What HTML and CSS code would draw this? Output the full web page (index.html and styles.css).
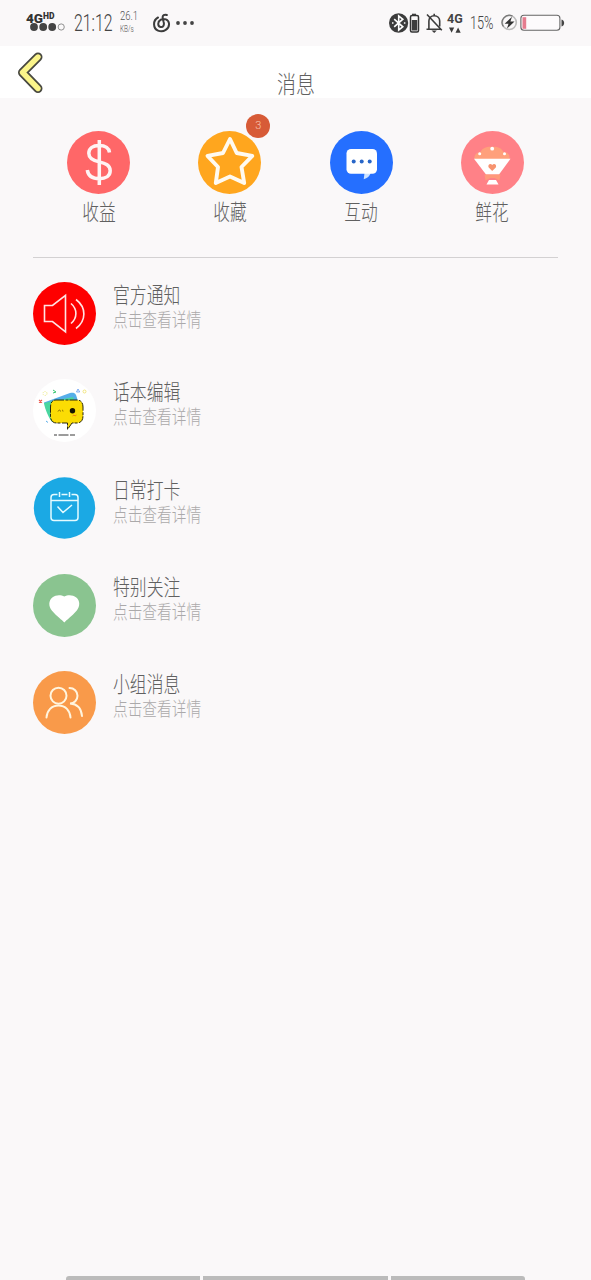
FILE: index.html
```html
<!DOCTYPE html>
<html lang="zh-CN">
<head>
<meta charset="utf-8">
<title>消息</title>
<link rel="stylesheet" href="styles.css">
</head>
<body>
<div class="screen">
  <div class="status">
    <div class="status-left">
      <div class="carrier">
        <div class="net"><b>4G</b><b class="hd">HD</b></div>
        <svg class="dots" width="36" height="8" viewBox="0 0 36 8"><g fill="#444"><circle cx="4" cy="4" r="3.9"/><circle cx="13.2" cy="4" r="3.9"/><circle cx="22.2" cy="4" r="3.9"/></g><circle cx="31.2" cy="4" r="3.1" fill="none" stroke="#777" stroke-width=".8"/></svg>
      </div>
      <div class="time"><span>21:12</span></div>
      <div class="speed"><span class="rate">26.1</span><span class="unit">KB/s</span></div>
      <svg class="music" width="18" height="20" viewBox="0 0 18 20" fill="none" stroke="#3c3c3c" stroke-width="2" stroke-linecap="round"><path d="M5 4.500C-.5 7.500 0 15.500 5 17.600c5.500 2.200 11.500-1.600 11-7.100C15.500 6.300 11 5 7.800 6.700c-3.300 1.900-3.400 6.700-.3 7.300 2.900.5 4-2.300 3.100-5L9.700 4.800C9.200 2.300 11.500 1 13.800 2"/></svg>
      <svg class="more" width="20" height="6" viewBox="0 0 20 6" fill="#444"><circle cx="3" cy="3" r="1.9"/><circle cx="10" cy="3" r="1.900"/><circle cx="17" cy="3" r="1.900"/></svg>
    </div>
    <div class="status-right">
      <svg width="31" height="20" viewBox="0 0 31 20"><ellipse cx="9.600" cy="10" rx="9.600" ry="9.800" fill="#3c3c3c"/><path d="M5.200 6.200l8.600 7.600-4.100 3.200V3l4.100 3.200-8.600 7.600" fill="none" stroke="#fff" stroke-width="1.600"/><path d="M3 10h1.500M14.900 10h1.500" stroke="#fff" stroke-width="1.600"/><path d="M23 .7h4v2h-4z" fill="#444"/><rect x="21.500" y="2.500" width="8" height="16.600" rx="1.500" fill="none" stroke="#333" stroke-width="1.500"/><path d="M22.800 7h5.400v10.500h-5.400z" fill="#3c3c3c"/></svg>
      <svg class="bell" width="17" height="20" viewBox="0 0 17 20" fill="none" stroke="#3c3c3c" stroke-width="1.600"><path d="M2.900 16V8c0-3 2-5.300 5.300-5.300S13.700 5 13.700 8v5.500M.5 16.200h14M8.200 2.700V.8M1 1.500l14.800 15.700"/><path d="M5.500 17.500h5.300L8.200 20z" fill="#3c3c3c" stroke="none"/></svg>
      <div class="data"><b>4G</b><svg width="12" height="6" viewBox="0 0 12 6" fill="#3c3c3c"><path d="M0 .5h5.200L2.600 5.700zM6.500 5.700h5.200L9.100.5z"/></svg></div>
      <div class="percent"><span>15%</span></div>
      <svg class="charge" width="17" height="17" viewBox="0 0 17 17"><circle cx="8.300" cy="8.500" r="7" fill="none" stroke="#bbb" stroke-width="1.600"/><path d="M2.500 12.700A7.200 7.200 0 0 1 11.500 2" fill="none" stroke="#777" stroke-width="1.200"/><path d="M11 2.800L3.600 9.700h3.900L6 14.600l7.500-7H9.400z" fill="#333"/></svg>
      <svg class="battery" width="46" height="18" viewBox="0 0 46 18"><rect x=".9" y="1.300" width="39" height="15" rx="3" fill="#fdfbfc" stroke="#666" stroke-width="1.100"/><path d="M2.500 3.200h3.700v11.600H2.500z" fill="#e57c8e"/><path d="M41.500 5.500c3.500.7 3.500 6.300 0 7z" fill="#444"/></svg>
    </div>
  </div>

  <header class="header">
    <svg class="back" width="28" height="42" viewBox="0 0 28 42" fill="none" stroke-linecap="round" stroke-linejoin="round"><path d="M21 5L5.500 20.500 21 36.500" stroke="#494940" stroke-width="9"/><path d="M21 5L5.500 20.500 21 36.500" stroke="#fbf58a" stroke-width="5.400"/></svg>
    <h1 class="title"><span>消息</span></h1>
  </header>

  <nav class="shortcuts">
    <div class="shortcut">
      <svg class="icon" viewBox="0 0 63 63"><circle cx="31.500" cy="31.500" r="31.500" fill="#ff6768"/><path d="M42.500 21.500c-.7-5-4.500-7-10.500-7-6.300 0-10.200 3-10.200 7.800 0 5.700 5 7.400 10.400 8.600 6.300 1.400 11 3.200 11 8.800 0 5-4.300 8-10.900 8-6.800 0-11.200-3-12-8.700M32.300 9v45" fill="none" stroke="#fff4f4" stroke-width="3.500"/></svg>
      <span class="label">收益</span>
    </div>
    <div class="shortcut">
      <div class="icon-wrap">
        <svg class="icon" viewBox="0 0 63 63"><circle cx="31.500" cy="31.500" r="31.500" fill="#ffa61e"/><path d="M32 8l6.700 14 15.600 2.800L43.500 36l2.700 16L32 45.500 17.800 52l2.200-16L9.500 24.800 25 22z" fill="none" stroke="#fffaf0" stroke-width="3.900" stroke-linejoin="round"/></svg>
        <span class="badge">3</span>
      </div>
      <span class="label">收藏</span>
    </div>
    <div class="shortcut">
      <svg class="icon" viewBox="0 0 63 63"><circle cx="31.500" cy="31.500" r="31.500" fill="#256fff"/><path d="M34.500 42l-.8 6.200c3.500-.8 6.200-3.200 7-6.200z" fill="#cce2ff"/><rect x="16.500" y="18" width="30.500" height="24.700" rx="4.500" fill="#fff"/><g fill="#2866c8"><circle cx="23.700" cy="30.500" r="2"/><circle cx="31.700" cy="30.500" r="2"/><circle cx="39.700" cy="30.500" r="2"/></g></svg>
      <span class="label">互动</span>
    </div>
    <div class="shortcut">
      <svg class="icon" viewBox="0 0 63 63"><circle cx="31.500" cy="31.500" r="31.500" fill="#ff8187"/><path d="M13.500 28c-.5-4 2-7 6-7 2-4 6-5.500 11.500-5.200 6-.3 9.500 1.500 11.500 5.200 4.500 0 6.500 3 6 7z" fill="#ffa07b"/><path d="M13 27.700h36.500L38 43.500H25z" fill="#fff"/><path d="M23.500 43.500h16l-1 6-5-2.500h-4l-5 2.500z" fill="#ff9a7b"/><path d="M28 49h7l2.500 4.500h-12z" fill="#fff"/><path d="M31.200 40l-3.500-3.500c-1.500-3 2-4.800 3.500-2.500 1.700-2.300 5-.5 3.600 2.500z" fill="#f7936f"/><g fill="#fff"><circle cx="18.700" cy="22.700" r="1.500"/><circle cx="31.200" cy="17.700" r="1.900"/><circle cx="43.500" cy="22.700" r="1.500"/></g></svg>
      <span class="label">鲜花</span>
    </div>
  </nav>

  <main class="messages">
    <div class="message">
      <svg class="icon" viewBox="0 0 63 63"><circle cx="31.500" cy="31.500" r="31.500" fill="#fe0000"/><g fill="none" stroke="#ffe3e3" stroke-width="1.600"><path d="M11.500 23.500h8l13-10.200v36.500L19.500 39.500h-8z"/><path d="M38 21.500c6.500 5.500 6.500 14.500 0 20M43 17.500c10.500 8 10.500 21 0 29"/></g></svg>
      <div class="text"><span class="name">官方通知</span><span class="hint">点击查看详情</span></div>
    </div>
    <div class="message">
      <svg class="icon" viewBox="0 0 63 63"><circle cx="31.500" cy="31.500" r="31.500" fill="#fff"/><path d="M11 23.500L37 14c5-1.300 6 1 7 5l3 12-29 10z" fill="#55aee9"/><path d="M11 24l29-6 5 15-26 10c-2.500-3-7-12-8-19z" fill="#49d6a0"/><path d="M23 21h21c4 0 6 3 6 7v9c0 4-2 7-6 7h-5l-4.500 6.500V44H23.500c-4 0-6-3-6-7v-9c0-4 1.500-7 5.500-7z" fill="#fbdc04" stroke="#29270c" stroke-width="1" stroke-dasharray="8 1.500 3 1"/><path d="M25 32.500c1-2 2-2 2.500 0m1.500-1c.7-.7 1 .2 1 1" fill="none" stroke="#6d5300" stroke-width=".8"/><circle cx="39.500" cy="31.700" r="2.700" fill="#171500"/><path d="M39.500 37l1.500-1 1 1 1.500-1" fill="none" stroke="#f18419"/><path d="M21 56h3m1.500 0h10m1.500 0h5" stroke="#222" stroke-width=".9"/><path d="M6 21l3 2.500m0-2.500l-3 2.500" stroke="#ed5a50" stroke-width="1.200"/><path d="M20 11l3 2-3 1" stroke="#38c76f" fill="none"/><path d="M43.500 13l1.500-3 1.700 3z" stroke="#4f8cef" stroke-width=".7" fill="none"/><circle cx="51.500" cy="12.500" r="1.500" fill="none" stroke="#eddb55" stroke-width=".7"/><circle cx="12" cy="14.500" r="2" fill="none" stroke="#e9e56b" stroke-width=".8" stroke-dasharray="1 1"/><path d="M13 42l2 1.500" stroke="#5aaee9"/></svg>
      <div class="text"><span class="name">话本编辑</span><span class="hint">点击查看详情</span></div>
    </div>
    <div class="message">
      <svg class="icon" viewBox="0 0 63 63"><circle cx="31.500" cy="31" r="30.700" fill="#1ba9e4"/><g fill="none" stroke="#e5fbff" stroke-width="1.500"><path d="M24.500 17.500H21a3 3 0 0 0-3 3v20a3 3 0 0 0 3 3h21a3 3 0 0 0 3-3v-20a3 3 0 0 0-3-3h-3.500M28.500 17.500h6M18 23.500h27M26.500 15v5M36.500 15v5M24.500 29.500l5.500 6 9-7.500"/></g></svg>
      <div class="text"><span class="name">日常打卡</span><span class="hint">点击查看详情</span></div>
    </div>
    <div class="message">
      <svg class="icon" viewBox="0 0 63 63"><circle cx="31.500" cy="31.500" r="31.500" fill="#8ac490"/><path d="M31.300 48.500C29 46 24 42.500 19 36.800c-3.700-4.500-3.500-10.200.3-13.300 3.800-3 8.700-2.700 12-1 3.300-1.700 8.200-2 12 1 3.800 3.100 4 8.800.3 13.300C38.500 42.500 33.700 46 31.300 48.500z" fill="#fff"/></svg>
      <div class="text"><span class="name">特别关注</span><span class="hint">点击查看详情</span></div>
    </div>
    <div class="message">
      <svg class="icon" viewBox="0 0 63 63"><circle cx="31.500" cy="31.500" r="31.500" fill="#f99a4a"/><g fill="none" stroke="#fff5df" stroke-width="2" stroke-linecap="round"><circle cx="25.500" cy="24.700" r="8"/><path d="M13.500 46.500c.5-7 5-12 12-12s11.500 5 12 12M36.500 17c4.500 0 8 3.200 8 7.700 0 4.600-3.300 7.600-7.500 7.800 7 .4 11.300 5 12 12.500"/></g></svg>
      <div class="text"><span class="name">小组消息</span><span class="hint">点击查看详情</span></div>
    </div>
  </main>

  <footer class="gesture"><i class="side"></i><i class="middle"></i><i class="side"></i></footer>
</div>
</body>
</html>
```
FILE: styles.css
```css
* { box-sizing: border-box; }
body {
  margin: 0;
  background: #faf8f9;
  font-family: "Noto Sans CJK SC", sans-serif;
  font-weight: 300;
  color: #606060;
}
svg { display: block; flex: none; }
.screen {
  width: 591px;
  height: 1280px;
  display: flex;
  flex-direction: column;
  overflow: hidden;
}
.status {
  height: 46px;
  flex: none;
  display: flex;
  justify-content: space-between;
  padding: 0 25px 0 26px;
  color: #444;
  font-family: Roboto, sans-serif;
}
.status-left, .status-right { display: flex; align-items: flex-start; }
.status-left { padding-top: 10px; }
.status-right { padding-top: 13px; }
.carrier { width: 48px; }
.net { display: flex; height: 13px; line-height: 17px; font-size: 13.5px; color: #333; }
.net b { font-weight: 900; }
.net .hd { font-size: 8.5px; line-height: 12px; }
.dots { margin: 0 0 0 4px; }
.time { width: 46px; height: 26px; font-size: 23px; line-height: 27px; }
.time span { display: inline-block; transform: scaleX(.69); transform-origin: left; }
.speed { width: 33px; display: flex; flex-direction: column; color: #555; }
.speed span { transform-origin: left; white-space: nowrap; }
.rate { font-size: 12px; line-height: 13px; transform: scaleX(.79); }
.unit { font-size: 9.5px; line-height: 11px; transform: scaleX(.67); }
.music { margin-top: 3px; }
.more { margin: 10px 0 0 4px; }
.bell { margin-left: 6px; }
.data { width: 18px; margin-left: 4px; font-size: 12.5px; line-height: 12px; }
.data b { display: block; font-weight: 700; height: 13px; }
.data svg { margin-left: 2px; margin-top: 1px; }
.percent { width: 31px; margin-left: 5px; font-size: 19px; line-height: 20px; }
.percent span { display: inline-block; transform: scaleX(.67); transform-origin: left; }
.charge { margin-top: 1px; }
.battery { margin: 1px 0 0 2px; }
.header {
  height: 52px;
  flex: none;
  background: #fff;
  display: grid;
  grid-template-columns: 46px 1fr 46px;
}
.back { margin: 6px 0 0 17px; }
.title { margin: 19px 0 0; font-size: 24px; line-height: 36px; font-weight: 300; text-align: center; }
.title span { display: inline-block; transform: scaleX(.79); }
.shortcuts {
  margin: 0 33px;
  height: 160px;
  flex: none;
  padding-top: 33px;
  display: grid;
  grid-template-columns: repeat(4, 1fr);
  border-bottom: 1px solid #d3d1d2;
}
.shortcut { display: flex; flex-direction: column; align-items: center; }
.icon { width: 63px; height: 63px; }
.icon-wrap { position: relative; }
.badge {
  position: absolute;
  left: 48px;
  top: -17px;
  width: 24px;
  height: 24px;
  border-radius: 50%;
  background: #d75b37;
  color: #f7c8b5;
  font-family: Roboto, sans-serif;
  font-size: 11px;
  line-height: 24px;
  text-align: center;
}
.label { font-size: 22px; line-height: 32px; transform: scaleX(.76); }
.messages {
  padding: 24px 33px 0;
  display: grid;
  grid-auto-rows: 63px;
  row-gap: 34.3px;
}
.message { display: flex; gap: 17px; }
.text { display: flex; flex-direction: column; align-items: flex-start; }
.text span { transform-origin: left; white-space: nowrap; }
.name { font-size: 22px; line-height: 23px; transform: scaleX(.765); }
.hint { font-size: 19px; line-height: 27px; transform: scaleX(.773); color: #aba9aa; }
.gesture {
  margin-top: auto;
  height: 4px;
  padding: 0 66px;
  display: grid;
  grid-template-columns: 134px 185px 134px;
  column-gap: 3px;
}
.gesture i { background: #bbb; }
.gesture i:first-child { border-top-left-radius: 3px; }
.gesture i:last-child { border-top-right-radius: 3px; }
```
